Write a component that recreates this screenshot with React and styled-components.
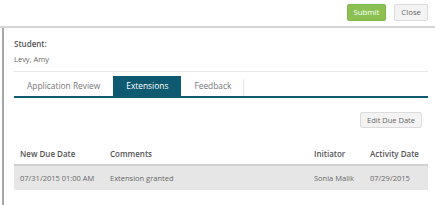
import React from 'react';
import styled, { createGlobalStyle } from 'styled-components';

const GlobalStyle = createGlobalStyle`
  body {
    margin: 0;
    background: #fff;
    font-family: "Open Sans", "Liberation Sans", sans-serif;
    color: #666;
  }
`;

const columns = [
  { key: 'due', title: 'New Due Date', width: 78 },
  { key: 'comment', title: 'Comments' },
  { key: 'initiator', title: 'Initiator', width: 44 },
  { key: 'activity', title: 'Activity Date', width: 52 },
];

const rows = [
  { due: '07/31/2015 01:00 AM', comment: 'Extension granted', initiator: 'Sonia Malik', activity: '07/29/2015' },
];

const App = () => {
  return (
    <React.Fragment>
      <GlobalStyle />
      <TopBar>
        <Button variant="primary">Submit</Button>
        <Button>Close</Button>
      </TopBar>
      <Main>
        <Label>Student:</Label>
        <Value>Levy, Amy</Value>
        <Divider />
        <Tabs>
          <Tab>Application Review</Tab>
          <Tab className="selected">Extensions</Tab>
          <Tab className="last">Feedback</Tab>
        </Tabs>
        <Actions>
          <Button>Edit Due Date</Button>
        </Actions>
        <Table>
          <thead>
            <tr>
              {columns.map(col => (
                <Th key={col.key} style={col.width ? { width: col.width } : undefined}>{col.title}</Th>
              ))}
            </tr>
          </thead>
          <tbody>
            {rows.map(row => (
              <tr key={row.due}>
                {columns.map(col => <Td key={col.key}>{row[col.key]}</Td>)}
              </tr>
            ))}
          </tbody>
        </Table>
      </Main>
    </React.Fragment>
  );
};

const TopBar = styled.div`
  display: flex;
  justify-content: flex-end;
  align-items: center;
  gap: 8px;
  padding-right: 7px;
  padding-bottom: 2px;
  height: 28px;
  box-sizing: border-box;
  border-bottom: 2px solid #d4d4d4;
`;

const Button = styled.button`
  font-family: inherit;
  font-size: 7.8px;
  height: 17px;
  padding: 0 6px;
  margin: 0;
  border-radius: 2px;
  cursor: pointer;
  border: 1px solid ${p => (p.variant === 'primary' ? '#7fb84a' : '#dcdcdc')};
  background: ${p => (p.variant === 'primary' ? '#8cc152' : '#f3f3f3')};
  color: ${p => (p.variant === 'primary' ? '#fff' : '#666')};
  line-height: 15px;
`;

const Main = styled.div`
  margin-left: 2px;
  border-left: 2px solid #a8a8a8;
  padding: 10px 7px 18px 10px;
`;

const Label = styled.div`
  font-size: 8px;
  font-weight: 600;
  color: #555;
  line-height: 12px;
`;

const Value = styled.div`
  font-size: 7.5px;
  line-height: 12px;
  margin-top: 3px;
  color: #666;
`;

const Divider = styled.div`
  height: 1px;
  background: #e6e6e6;
  margin-top: 6px;
`;

const Tabs = styled.div`
  display: flex;
  margin-top: 4px;
  border-bottom: 2px solid #0e5a70;
`;

const Tab = styled.div`
  font-size: 8.4px;
  height: 20px;
  line-height: 20px;
  padding: 0 13px;
  color: #777;
  &.selected {
    background: #0e5a70;
    color: #fff;
  }
  &.last {
    padding-right: 12px;
    border-right: 1px solid #e6e6e6;
    height: 17px;
    margin-top: 3px;
    line-height: 14px;
  }
`;

const Actions = styled.div`
  display: flex;
  justify-content: flex-end;
  padding-right: 6px;
  margin-top: 14px;
  button {
    font-size: 7.5px;
    height: 16px;
    padding: 0 6px;
    line-height: 14px;
  }
`;

const Table = styled.table`
  width: 100%;
  table-layout: fixed;
  border-collapse: collapse;
  margin-top: 18px;
  font-size: 7.5px;
`;

const Th = styled.th`
  text-align: left;
  font-weight: 600;
  font-size: 8px;
  color: #555;
  padding: 0 6px 4px 6px;
  height: 14px;
  border-bottom: 2px solid #cfcfcf;
  white-space: nowrap;
`;

const Td = styled.td`
  background: #e6e6e6;
  height: 24px;
  padding: 0 6px;
  color: #666;
  white-space: nowrap;
`;

export default App;
